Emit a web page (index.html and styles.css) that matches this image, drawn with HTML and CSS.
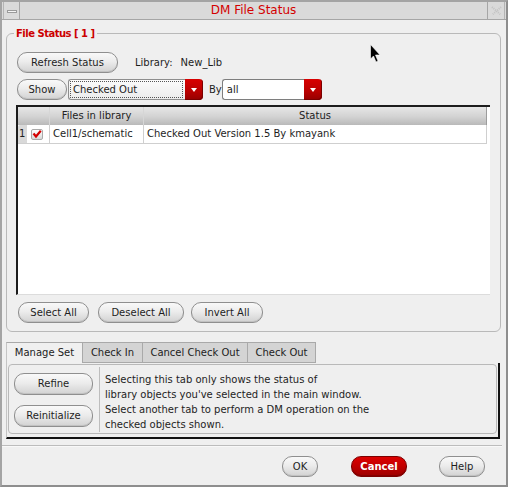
FILE: index.html
```html
<!DOCTYPE html>
<html>
<head>
<meta charset="utf-8">
<title>DM File Status</title>
<link rel="stylesheet" href="styles.css">
</head>
<body>
<div class="window">
  <div class="titlebar">
    <div class="tb-btn tb-min"><span class="min-bar"></span></div>
    <div class="title">DM File Status</div>
    <div class="tb-btn tb-close">
      <svg width="15" height="14" viewBox="0 0 15 14">
        <path d="M3 3 L12 11 M12 3 L3 11" stroke="#c4c4c4" stroke-width="2" stroke-dasharray="1 1" fill="none"/>
      </svg>
    </div>
  </div>
  <div class="content">
    <fieldset class="group">
      <legend class="group-title">File Status [ 1 ]</legend>
      <div class="row row-refresh">
        <button class="btn btn-refresh">Refresh Status</button>
        <span class="lib-label">Library:</span>
        <span class="lib-name">New_Lib</span>
      </div>
      <div class="row row-show">
        <button class="btn btn-show">Show</button>
        <div class="combo combo-show">
          <span class="combo-field"><span class="focus-rect">Checked Out</span></span>
          <span class="combo-arrow"><span class="tri"></span></span>
        </div>
        <span class="by-label">By</span>
        <div class="combo combo-by">
          <span class="combo-field">all</span>
          <span class="combo-arrow"><span class="tri"></span></span>
        </div>
      </div>
      <div class="table">
        <div class="thead">
          <div class="th th-lead"></div>
          <div class="th">Files in library</div>
          <div class="th th-last">Status</div>
        </div>
        <div class="tr">
          <div class="td td-lead">
            <span class="rownum">1</span>
            <span class="check">
              <svg width="10" height="10" viewBox="0 0 10 10">
                <path d="M1.5 4.5 L4 7.5 L8.8 1.8" stroke="#d40000" stroke-width="2.2" fill="none"/>
              </svg>
            </span>
          </div>
          <div class="td">Cell1/schematic</div>
          <div class="td td-last">Checked Out Version 1.5 By kmayank</div>
        </div>
      </div>
      <div class="row row-select">
        <button class="btn btn-selall">Select All</button>
        <button class="btn btn-desel">Deselect All</button>
        <button class="btn btn-invert">Invert All</button>
      </div>
    </fieldset>

    <div class="tabs">
      <div class="tab tab-active tab-manage">Manage Set</div>
      <div class="tab tab-checkin">Check In</div>
      <div class="tab tab-cancel">Cancel Check Out</div>
      <div class="tab tab-checkout">Check Out</div>
    </div>
    <div class="tabpanel">
      <div class="panel-box">
        <div class="panel-buttons">
          <button class="btn btn-panel">Refine</button>
          <button class="btn btn-panel">Reinitialize</button>
        </div>
        <div class="panel-text">
          Selecting this tab only shows the status of<br>
          library objects you've selected in the main window.<br>
          Select another tab to perform a DM operation on the<br>
          checked objects shown.
        </div>
      </div>
    </div>
    <div class="separator"></div>
    <div class="footer">
      <button class="btn btn-ok">OK</button>
      <button class="btn btn-cancel">Cancel</button>
      <button class="btn btn-help">Help</button>
    </div>
  </div>
  <svg class="cursor" width="11" height="19" viewBox="0 0 11 19">
    <path d="M0.5 0.5 L0.5 15 L3.5 12 L6 18 L8 17 L5.5 11 L10 11 Z" fill="#000" stroke="#fff" stroke-width="0.6"/>
  </svg>
</div>
</body>
</html>
```

FILE: styles.css
```css
html, body {
  margin: 0;
  padding: 0;
}

body {
  font-family: "DejaVu Sans", "Liberation Sans", sans-serif;
  font-size: 10px;
  color: #1e1e1e;
  background: #efefef;
}

.window {
  position: relative;
  width: 508px;
  height: 487px;
  box-sizing: border-box;
  border: 2px solid #a4a4a4;
  border-right-color: #8e8e8e;
  border-bottom-color: #8e8e8e;
  background: #efefef;
  overflow: hidden;
}

/* ---------- title bar ---------- */
.titlebar {
  display: flex;
  align-items: stretch;
  height: 17px;
  background: #dadada;
  border-bottom: 1px solid #a6a6a6;
}

.tb-btn {
  width: 16px;
  box-sizing: border-box;
  display: flex;
  align-items: center;
  justify-content: center;
}

.tb-min {
  margin-left: 1px;
  border-left: 1px solid #b4b4b4;
  border-right: 1px solid #a6a6a6;
  width: 17px;
}

.min-bar {
  display: block;
  width: 10px;
  height: 3px;
  box-sizing: border-box;
  border: 1px solid #9a9a9a;
  background: #f4f4f4;
  margin-top: 1px;
}

.title {
  flex: 1;
  text-align: center;
  color: #d40000;
  font-size: 12px;
  line-height: 17px;
}

.tb-close {
  width: 18px;
  margin-right: 1px;
  border-left: 1px solid #a6a6a6;
  border-right: 1px solid #b4b4b4;
}

/* ---------- content ---------- */
.content {
  display: flex;
  flex-direction: column;
}

.group {
  margin: 7px 5px 0 4px;
  padding: 12px 9px 8px 10px;
  border: 1px solid #b9b9b9;
  border-radius: 6px;
  min-width: 0;
}

.group-title {
  font-weight: bold;
  color: #cc0000;
  padding: 0 2px;
  margin-left: -3px;
  line-height: 13px;
  letter-spacing: -0.5px;
}

.row {
  display: flex;
  align-items: center;
}

.row-refresh {
  height: 21px;
  margin-bottom: 6px;
}

.row-show {
  height: 21px;
  margin-bottom: 5px;
}

/* ---------- buttons ---------- */
.btn {
  font-family: "DejaVu Sans", "Liberation Sans", sans-serif;
  font-size: 10px;
  color: #1e1e1e;
  height: 21px;
  padding: 0;
  margin: 0;
  box-sizing: border-box;
  border: 1px solid #8f8f8f;
  border-radius: 10px;
  background: linear-gradient(to bottom, #f9f9f9 0%, #ececec 45%, #d2d2d2 100%);
  box-shadow: inset 0 -1px 0 #c2c2c2;
  line-height: 19px;
  text-align: center;
}

.btn-refresh { width: 101px; }
.btn-show { width: 50px; }

.lib-label {
  margin-left: 17px;
}

.lib-name {
  margin-left: 8px;
}

/* ---------- combos ---------- */
.combo {
  display: flex;
  height: 21px;
  box-sizing: border-box;
}

.combo-field {
  flex: 1;
  display: flex;
  align-items: center;
  box-sizing: border-box;
  border: 1px solid #8e8e8e;
  border-right: none;
  border-radius: 3px 0 0 3px;
  background: #fff;
}

.combo-arrow {
  width: 18px;
  display: flex;
  align-items: center;
  justify-content: center;
  border-radius: 0 4px 4px 0;
  background: linear-gradient(to bottom, #d80000 0%, #b80000 60%, #960000 100%);
  box-shadow: inset -1px -1px 0 #7a0000;
}

.tri {
  width: 0;
  height: 0;
  border-left: 3.5px solid transparent;
  border-right: 3.5px solid transparent;
  border-top: 4px solid #fff;
  margin-top: 1px;
}

.combo-show {
  width: 135px;
  margin-left: 1px;
}

.combo-show .combo-field {
  background: linear-gradient(to bottom, #fbfbfb, #ececec);
  padding: 1px 2px 1px 1px;
}

.focus-rect {
  display: block;
  flex: 1;
  height: 15px;
  line-height: 15px;
  border: 1px dotted #555;
  padding-left: 2px;
}

.by-label {
  margin-left: 6px;
}

.combo-by {
  width: 100px;
  margin-left: 0;
}

.combo-by .combo-field {
  padding-left: 4px;
  border-color: #7e7e7e;
}

/* ---------- table ---------- */
.table {
  margin-left: -1px;
  width: 474px;
  height: 190px;
  box-sizing: border-box;
  border-top: 2px solid #1c1c1c;
  border-left: 2px solid #1c1c1c;
  border-bottom: 1px solid #dcdcdc;
  padding-right: 3px;
  background: #fff;
  margin-bottom: 7px;
}

.thead,
.tr {
  display: grid;
  grid-template-columns: 32px 94px 1fr;
}

.thead {
  height: 18px;
  background: linear-gradient(to bottom, #e6e6e6 0%, #d2d2d2 55%, #b9b9b9 100%);
}

.th {
  border-right: 1px solid #d6d6d6;
  text-align: center;
  line-height: 18px;
  color: #222;
}

.th-last {
  border-right: 1px solid #9c9c9c;
}

.tr {
  height: 18px;
  border-bottom: 1px solid #cfcfcf;
  box-sizing: content-box;
}

.td {
  border-right: 1px solid #cfcfcf;
  line-height: 18px;
  padding-left: 3px;
  white-space: nowrap;
}

.td-last {
  border-right: 1px solid #cfcfcf;
}

.td-lead {
  display: flex;
  align-items: stretch;
  padding-left: 0;
}

.rownum {
  width: 9px;
  background: #d9d9d9;
  border-radius: 2px 0 0 0;
  text-align: left;
  padding-left: 1px;
  box-sizing: border-box;
}

.check {
  align-self: center;
  margin-left: 4px;
  width: 12px;
  height: 11px;
  box-sizing: border-box;
  border: 1px solid #a9a9a9;
  border-radius: 2px;
  background: linear-gradient(to bottom, #ffffff, #d8d8d8);
  display: flex;
  align-items: center;
  justify-content: center;
}

/* ---------- select buttons ---------- */
.row-select {
  height: 21px;
}

.btn-selall { width: 71px; margin-left: 1px; }
.btn-desel { width: 86px; margin-left: 9px; }
.btn-invert { width: 72px; margin-left: 7px; }

/* ---------- tabs ---------- */
.tabs {
  display: flex;
  margin: 10px 0 0 4px;
  height: 21px;
}

.tab {
  box-sizing: border-box;
  height: 21px;
  line-height: 20px;
  text-align: center;
  border: 1px solid #a9a9a9;
  border-left: none;
  border-bottom: 1px solid #a9a9a9;
  background: #d4d4d4;
  color: #222;
}

.tab-active {
  background: #f0f0f0;
  border-left: 1px solid #c4c4c4;
  border-bottom: none;
}

.tab-manage { width: 77px; }
.tab-checkin { width: 60px; }
.tab-cancel { width: 105px; }
.tab-checkout { width: 68px; }

.tabpanel {
  margin-left: 4px;
  width: 494px;
  box-sizing: border-box;
  border-left: 1px solid #c4c4c4;
  border-right: 2px solid #121212;
  border-bottom: 2px solid #121212;
  padding: 1px 1px 3px 1px;
  background: #efefef;
}

.panel-box {
  display: flex;
  height: 70px;
  box-sizing: border-box;
  border: 1px solid #b9b9b9;
  border-radius: 4px;
}

.panel-buttons {
  width: 84px;
  box-sizing: border-box;
  padding: 8px 0 0 5px;
  display: flex;
  flex-direction: column;
  gap: 10px;
}

.btn-panel {
  width: 79px;
  height: 22px;
  line-height: 20px;
}

.panel-text {
  margin: 2px 0 1px 6px;
  border-left: 1px solid #bdbdbd;
  padding: 5px 0 0 5px;
  line-height: 15px;
  color: #1e1e1e;
}

.separator {
  margin: 6px 4px 0 0;
  height: 1px;
  background: #bcbcbc;
  border-bottom: 1px solid #f8f8f8;
}

/* ---------- footer ---------- */
.footer {
  display: flex;
  justify-content: flex-end;
  margin-top: 9px;
  padding-right: 21px;
  height: 21px;
}

.btn-ok { width: 36px; }
.btn-cancel {
  width: 56px;
  margin-left: 33px;
  color: #fff;
  font-weight: bold;
  border-color: #7c0000;
  background: linear-gradient(to bottom, #dc0000 0%, #c00000 50%, #9c0000 100%);
  box-shadow: inset 0 -1px 0 #850000;
}
.btn-help { width: 46px; margin-left: 32px; }

/* mouse pointer overlay */
.cursor {
  position: absolute;
  left: 368px;
  top: 42px;
}
```
